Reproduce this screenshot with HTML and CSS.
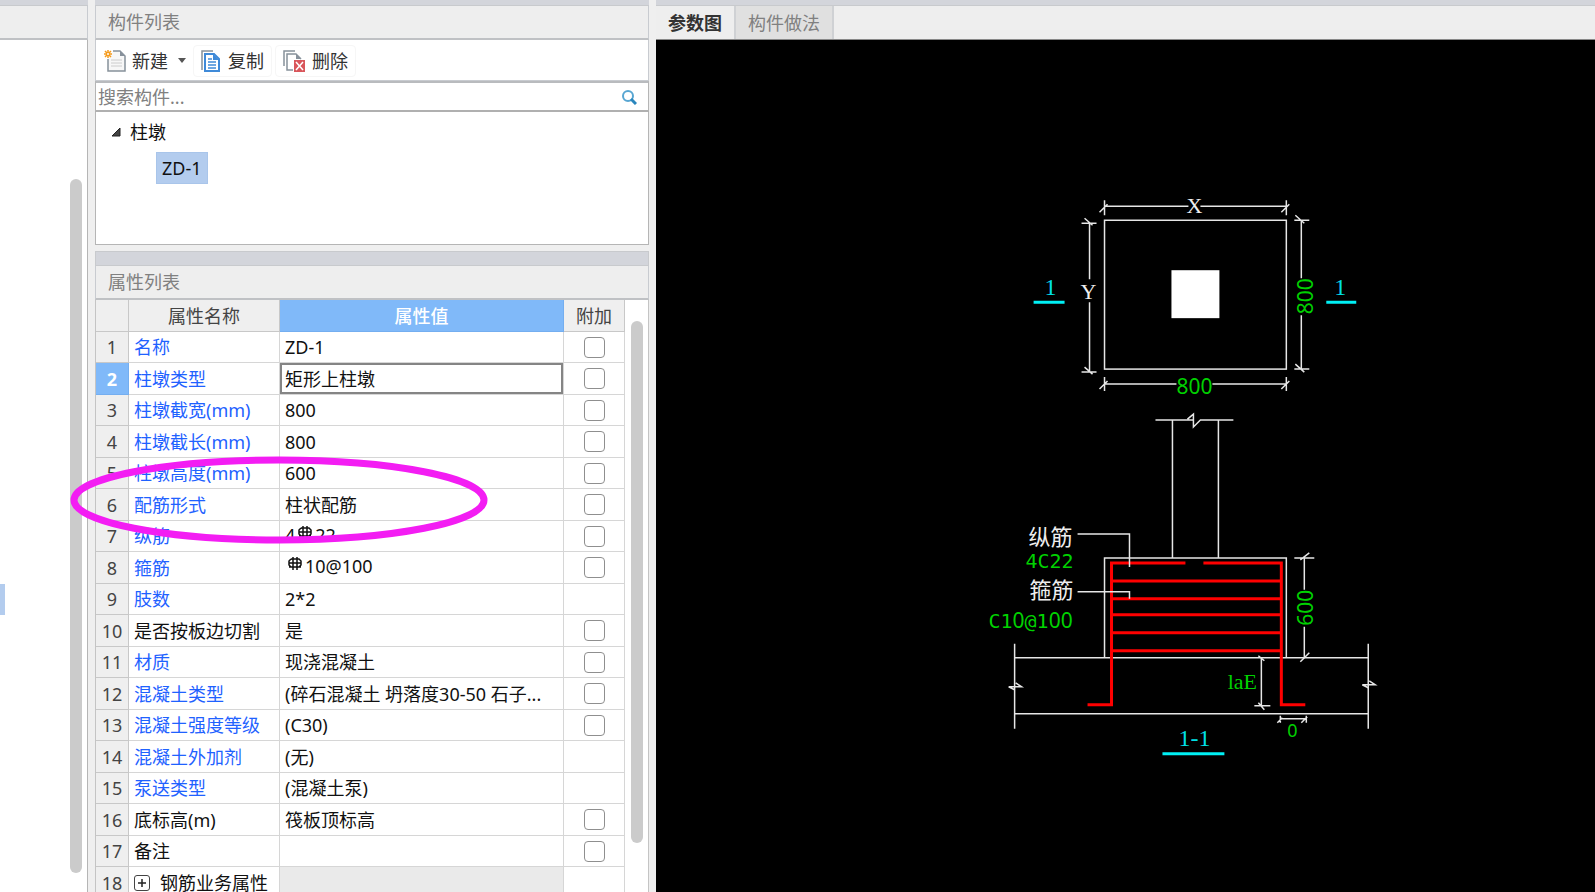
FILE: index.html
```html
<!DOCTYPE html>
<html lang="zh-CN">
<head>
    <meta charset="UTF-8">
    <meta name="viewport" content="width=device-width, initial-scale=1.0">
    <title>构件列表</title>
    <link rel="stylesheet" href="styles.css">
</head>
<body>
    <div class="workspace">
        <aside class="pane nav-pane">
            <div class="strip"></div>
            <div class="pane-title"></div>
            <div class="nav-body">
                <div class="nav-selected"></div>
                <div class="scrollbar"><div class="thumb"></div></div>
            </div>
        </aside>

        <div class="middle">
            <section class="pane list-pane">
                <div class="strip"></div>
                <h2 class="pane-title">构件列表</h2>
                <div class="toolbar">
                    <button type="button" class="tool tool-new">
                        <svg width="22" height="22" viewBox="0 0 22 22" fill="none">
                            <path d="M9 1h7l5 5v15H4V9" fill="#f7f7f7" stroke="#87919b" stroke-width="1.5"/>
                            <path d="M16 1v5h5z" fill="#87919b"/>
                            <path d="M7 10h11M7 13h11M7 16h11" stroke="#ccc"/>
                            <path d="M4 0v8M0 4h8M1 1l6 6M7 1L1 7" stroke="#f59b1c" stroke-width="1.5"/>
                            <circle cx="4" cy="4" r="1" fill="#fff"/>
                        </svg>
                        新建
                        <span class="caret"></span>
                    </button>
                    <button type="button" class="tool">
                        <svg width="20" height="22" viewBox="0 0 20 22" fill="none">
                            <path d="M1 20V1h11" stroke="#87919b" stroke-width="1.5"/>
                            <path d="M4 4h9l5 5v12H4z" fill="#fff" stroke="#3f8ad8" stroke-width="2"/>
                            <path d="M12 4v6h6z" fill="#3f8ad8"/>
                            <path d="M7 9h4M7 12h8M7 15h8M7 18h8" stroke="#3f8ad8" stroke-width="1.5"/>
                        </svg>
                        复制
                    </button>
                    <button type="button" class="tool">
                        <svg width="22" height="22" viewBox="0 0 22 22" fill="none">
                            <path d="M1 16V1h11" stroke="#87919b" stroke-width="1.5"/>
                            <path d="M10 20H4V4h9l5 5" stroke="#87919b" stroke-width="1.5"/>
                            <path d="M13 4v5h5z" fill="#87919b"/>
                            <path d="M11 10h11v12H11z" fill="#d9565b"/>
                            <path d="M13 12l7 8M20 12l-7 8" stroke="#fff" stroke-width="1.5"/>
                        </svg>
                        删除
                    </button>
                </div>
                <div class="search">
                    <input type="text" placeholder="搜索构件..." aria-label="搜索构件">
                    <svg width="16" height="16" viewBox="0 0 16 16" fill="none">
                        <circle cx="7" cy="7" r="5" stroke="#58a6d2" stroke-width="2"/>
                        <path d="M10 10l5 5" stroke="#2a86bd" stroke-width="3"/>
                    </svg>
                </div>
                <div class="tree">
                    <div class="tree-root">
                        <svg width="10" height="10" viewBox="0 0 10 10"><path d="M9 1v8H1z" fill="#444" stroke="#222"/></svg>
                        柱墩
                    </div>
                    <div class="tree-item">ZD-1</div>
                </div>
            </section>

            <section class="pane prop-pane">
                <div class="strip"></div>
                <h2 class="pane-title">属性列表</h2>
                <div class="prop-body">
                    <table>
                        <colgroup>
                            <col class="col-no"><col class="col-name"><col class="col-value"><col class="col-add">
                        </colgroup>
                        <thead>
                            <tr><th></th><th>属性名称</th><th class="active">属性值</th><th>附加</th></tr>
                        </thead>
                        <tbody>
                            <tr><th>1</th><td class="key">名称</td><td>ZD-1</td><td><input type="checkbox" aria-label="名称"></td></tr>
                            <tr class="current"><th>2</th><td class="key">柱墩类型</td><td class="editing">矩形上柱墩</td><td><input type="checkbox" aria-label="柱墩类型"></td></tr>
                            <tr><th>3</th><td class="key">柱墩截宽(mm)</td><td>800</td><td><input type="checkbox" aria-label="柱墩截宽"></td></tr>
                            <tr><th>4</th><td class="key">柱墩截长(mm)</td><td>800</td><td><input type="checkbox" aria-label="柱墩截长"></td></tr>
                            <tr><th>5</th><td class="key">柱墩高度(mm)</td><td>600</td><td><input type="checkbox" aria-label="柱墩高度"></td></tr>
                            <tr><th>6</th><td class="key">配筋形式</td><td>柱状配筋</td><td><input type="checkbox" aria-label="配筋形式"></td></tr>
                            <tr><th>7</th><td class="key">纵筋</td><td class="rebar">4<svg class="grade" viewBox="0 0 16 16"><use href="#grade"/></svg>22</td><td><input type="checkbox" aria-label="纵筋"></td></tr>
                            <tr><th>8</th><td class="key">箍筋</td><td class="rebar"><svg class="grade" viewBox="0 0 16 16"><use href="#grade"/></svg>10@100</td><td><input type="checkbox" aria-label="箍筋"></td></tr>
                            <tr><th>9</th><td class="key">肢数</td><td>2*2</td><td></td></tr>
                            <tr><th>10</th><td>是否按板边切割</td><td>是</td><td><input type="checkbox" aria-label="是否按板边切割"></td></tr>
                            <tr><th>11</th><td class="key">材质</td><td>现浇混凝土</td><td><input type="checkbox" aria-label="材质"></td></tr>
                            <tr><th>12</th><td class="key">混凝土类型</td><td>(碎石混凝土 坍落度30-50 石子...</td><td><input type="checkbox" aria-label="混凝土类型"></td></tr>
                            <tr><th>13</th><td class="key">混凝土强度等级</td><td>(C30)</td><td><input type="checkbox" aria-label="混凝土强度等级"></td></tr>
                            <tr><th>14</th><td class="key">混凝土外加剂</td><td>(无)</td><td></td></tr>
                            <tr><th>15</th><td class="key">泵送类型</td><td>(混凝土泵)</td><td></td></tr>
                            <tr><th>16</th><td>底标高(m)</td><td>筏板顶标高</td><td><input type="checkbox" aria-label="底标高"></td></tr>
                            <tr><th>17</th><td>备注</td><td></td><td><input type="checkbox" aria-label="备注"></td></tr>
                            <tr><th>18</th><td><button type="button" class="expand" aria-label="展开"><svg width="8" height="8" viewBox="0 0 8 8"><path d="M4 0v8M0 4h8" stroke="#222" stroke-width="1.5"/></svg></button>钢筋业务属性</td><td class="disabled"></td><td></td></tr>
                        </tbody>
                    </table>
                    <div class="scrollbar"><div class="thumb"></div></div>
                </div>
            </section>
        </div>

        <main class="pane view-pane">
            <div class="strip"></div>
            <div class="tabs">
                <button type="button" class="tab selected">参数图</button>
                <button type="button" class="tab">构件做法</button>
            </div>
            <div class="canvas">
                <svg viewBox="655 40 940 852">
                    <!-- 平面图 -->
                    <g class="line">
                        <rect x="1104" y="220" width="182" height="149"/>
                        <path d="M1104 206h84M1200 206h86M1104 200v15M1286 200v15M1099 212l8-8M1281 212l8-8"/>
                        <path d="M1104 384h72M1212 384h74M1104 377v14M1286 377v14M1099 389l8-8M1281 389l8-8"/>
                        <path d="M1089 223v56M1089 302v70M1081 223h15M1081 372h15M1084 218l8 7M1084 367l8 7"/>
                        <path d="M1301 220v58M1301 315v54M1294 220h15M1294 369h15M1295 215l9 8M1295 364l9 8"/>
                    </g>
                    <rect x="1171" y="270" width="48" height="48" fill="#fff"/>
                    <path class="mark" d="M1033 302h31M1326 302h30"/>
                    <text class="cad white small" x="1194" y="213">X</text>
                    <text class="cad white small" x="1088" y="299">Y</text>
                    <text class="cad cyan" x="1050" y="295">1</text>
                    <text class="cad cyan" x="1340" y="295">1</text>
                    <text class="num" x="1194" y="394">800</text>
                    <text class="num" transform="translate(1313 296) rotate(-90)">800</text>

                    <!-- 1-1 剖面 -->
                    <g class="line">
                        <path d="M1155 420h38v-6l-6 5M1193 420v7l7-7h33M1172 420v138M1218 420v138"/>
                        <path d="M1104 658V558h182v100"/>
                        <path d="M1014 658h354M1014 714h354M1014 644v85M1368 644v85"/>
                        <path d="M1008 687h13l-6-4M1008 687l6 3M1362 685h13l-6-4M1362 685l6 3"/>
                        <path d="M1304 558v32M1304 627v31M1294 558h20M1300 560l9-7M1300 662l9-9"/>
                        <path d="M1261 658v48M1254 706h16M1258 656l6 5M1258 703l6 7"/>
                        <path d="M1280 719h26M1280 716v7M1306 716v7M1277 723l5-5M1301 723l6-6"/>
                    </g>
                    <g class="bar">
                        <path d="M1185 563h-74v142h-24M1203 563h78v142h24"/>
                        <path d="M1111 581h170M1111 599h170M1111 615h170M1111 633h170M1111 651h170"/>
                    </g>
                    <path class="line" d="M1077 534h52v33M1077 592h52v7"/>
                    <path class="mark" d="M1162 754h62"/>
                    <text class="cjk" x="1050" y="545">纵筋</text>
                    <text class="letter green" x="1049" y="568">4C22</text>
                    <text class="cjk" x="1051" y="598">箍筋</text>
                    <text class="letter green" x="1030" y="628">C1<tspan class="num">0</tspan>@1<tspan class="num">00</tspan></text>
                    <text class="num" transform="translate(1313 608) rotate(-90)">600</text>
                    <text class="cad green small" x="1242" y="689">laE</text>
                    <text class="num small" x="1292" y="737">0</text>
                    <text class="cad cyan" x="1194" y="746">1-1</text>
                </svg>
            </div>
        </main>

        <svg class="highlight" viewBox="0 0 418 88">
            <ellipse cx="209" cy="44" rx="205" ry="40"/>
        </svg>
    </div>

    <!-- 钢筋等级符号 -->
    <svg class="defs">
        <symbol id="grade" viewBox="0 0 16 16">
            <path d="M6 0v13M10 0v13M2 10h12M2 6h12M4 2h8l2 2v4l-2 2M4 2L2 4v4l2 2" fill="none" stroke="#111" stroke-width="1.5"/>
        </symbol>
    </svg>
</body>
</html>
```

FILE: styles.css
```css
* {
    box-sizing: border-box;
}
body {
    margin: 0;
    font-family: "Noto Sans", "Noto Sans CJK SC", sans-serif;
    font-size: 18px;
    line-height: 26px;
    color: #111;
    background: #efefef;
}
button, input {
    font: inherit;
    color: inherit;
    margin: 0;
}
.workspace {
    position: relative;
    display: grid;
    grid-template-columns: 88px 554px minmax(0, 1fr);
    gap: 7px;
    height: 100vh;
    overflow: hidden;
}
.pane {
    display: flex;
    flex-direction: column;
    min-height: 0;
}
.strip {
    flex: none;
    height: 6px;
    background: #d3d5db;
    border-bottom: 1px solid #c8cacd;
}
.pane-title {
    flex: none;
    height: 34px;
    margin: 0;
    padding: 3px 12px;
    font-size: 18px;
    font-weight: 400;
    color: #808080;
    background: #eee;
    border: 1px solid #c8cbd0;
    border-top: 0;
    border-bottom: 2px solid #bfc1c4;
}
.scrollbar {
    flex: none;
    display: flex;
    width: 12px;
}
.thumb {
    flex: 1;
    border-radius: 6px;
    background: #cbcbcb;
}

/* 左侧导航 */
.nav-pane .pane-title {
    border-left: 0;
}
.nav-body {
    flex: 1;
    display: flex;
    justify-content: space-between;
    padding-right: 5px;
    background: #fff;
    border-right: 1px solid #b5b5b5;
}
.nav-selected {
    width: 5px;
    height: 31px;
    margin-top: 544px;
    background: #b3ccee;
}
.nav-body .scrollbar {
    padding: 139px 0 19px;
}

/* 构件列表 */
.middle {
    display: flex;
    flex-direction: column;
    gap: 6px;
    min-height: 0;
}
.list-pane {
    flex: none;
}
.toolbar {
    display: flex;
    align-items: center;
    gap: 3px;
    height: 41px;
    padding: 1px 0 0 4px;
    background: #fff;
    border: 1px solid #c8cbd0;
    border-top: 0;
}
.tool {
    display: flex;
    align-items: center;
    gap: 7px;
    height: 32px;
    padding: 0 7px;
    color: #333;
    background: #fff;
    border: 1px solid #f6f6f6;
    border-radius: 4px;
}
.tool-new {
    gap: 6px;
    padding: 0 3px;
    border-color: #fff;
}
.caret {
    margin-left: 4px;
    border: 4px solid transparent;
    border-top: 5px solid #555;
    border-bottom: 0;
}
.search {
    display: flex;
    align-items: center;
    height: 31px;
    padding-right: 11px;
    background: #fff;
    border: 1px solid #b5b5b5;
    border-top: 2px solid #b9bbbe;
    border-bottom: 2px solid #b0b0b0;
}
.search input {
    flex: 1;
    min-width: 0;
    height: 26px;
    padding: 0 2px;
    border: 0;
    outline: 0;
    background: none;
}
.search input::placeholder {
    color: #808080;
    opacity: 1;
}
.tree {
    height: 133px;
    padding: 7px 15px;
    background: #fff;
    border: 1px solid #b5b5b5;
    border-top: 0;
}
.tree-root {
    display: flex;
    align-items: center;
    gap: 9px;
}
.tree-item {
    width: max-content;
    margin: 7px 0 0 45px;
    padding: 2px 5px;
    border: 1px solid #a9c5ea;
    background: #b3ccee;
}

/* 属性列表 */
.prop-pane {
    flex: 1;
}
.prop-pane .strip {
    height: 15px;
    border: 1px solid #c8cacd;
}
.prop-body {
    flex: 1;
    display: flex;
    justify-content: space-between;
    min-height: 0;
    overflow: hidden;
    padding-right: 5px;
    background: #fff;
    border: 1px solid #c4c4c4;
    border-top: 0;
    border-bottom: 0;
}
.prop-body .scrollbar {
    padding: 21px 0 49px;
}
table {
    flex: none;
    width: 529px;
    table-layout: fixed;
    border-collapse: separate;
    border-spacing: 0;
    align-self: flex-start;
}
.col-no {
    width: 33px;
}
.col-name {
    width: 151px;
}
.col-value {
    width: 284px;
}
.col-add {
    width: 61px;
}
tr {
    height: 31px;
}
thead tr, tbody tr:nth-child(even) {
    height: 32px;
}
th, td {
    padding: 0 0 0 5px;
    line-height: 26px;
    font-weight: 400;
    text-align: left;
    white-space: nowrap;
    overflow: hidden;
    border-right: 1px solid #d6d6d6;
    border-bottom: 1px solid #d6d6d6;
}
th {
    padding: 0;
    text-align: center;
    color: #444;
    background: #efefef;
    border-color: #c8c8c8;
}
th.active, .current th {
    color: #fff;
    background: #80b9f9;
    border-color: #74aef0;
}
th.active {
    font-weight: 500;
}
.current th {
    font-weight: 700;
}
td:last-child {
    padding: 0;
    text-align: center;
}
.key {
    color: #1f62ff;
}
.editing {
    box-shadow: inset 0 0 0 2px #858585;
}
.disabled {
    background: #eaeaea;
}
.grade {
    width: 16px;
    height: 16px;
    margin: 0 2px;
    vertical-align: 0;
}
.rebar {
    padding-bottom: 3px;
    line-height: 24px;
}
input[type="checkbox"] {
    appearance: none;
    display: block;
    width: 21px;
    height: 21px;
    margin: 0 auto;
    border: 1px solid #8f8f8f;
    border-radius: 4px;
    background: #fff;
}
.expand {
    display: inline-grid;
    place-items: center;
    width: 16px;
    height: 16px;
    margin-right: 10px;
    padding: 0;
    vertical-align: 3px;
    line-height: 8px;
    background: #fff;
    border: 1px solid #444;
    border-radius: 3px;
}
.expand svg {
    display: block;
}

/* 参数图 */
.tabs {
    flex: none;
    display: flex;
    height: 33px;
    background: #eee;
}
.tab {
    padding: 0 12px;
    color: #808080;
    background: #e0e0e0;
    border: 0;
    border-right: 2px solid #cfd1d4;
}
.tab.selected {
    font-weight: 700;
    color: #333;
    background: #eee;
}
.canvas {
    flex: 1;
    min-height: 0;
    background: #000;
    border-top: 1px solid #888;
}
.canvas svg {
    display: block;
    width: 100%;
    height: 100%;
}
.line {
    fill: none;
    stroke: #e6e6e6;
    stroke-width: 1.5;
}
.bar {
    fill: none;
    stroke: #f00;
    stroke-width: 3;
}
.mark {
    stroke: #00f0f5;
    stroke-width: 3;
}
.canvas text {
    text-anchor: middle;
}
.cad {
    font-family: "Liberation Serif", serif;
    font-size: 24px;
}
.cad.small {
    font-size: 22px;
}
.letter {
    font-family: "DejaVu Sans Mono", monospace;
    font-size: 20px;
}
.num {
    font-family: "Noto Sans", sans-serif;
    font-size: 21px;
    fill: #00d200;
}
.num.small {
    font-size: 18px;
}
.cjk {
    font-family: "Noto Sans CJK SC", sans-serif;
    font-size: 22px;
    fill: #eee;
}
.white {
    fill: #eee;
}
.green {
    fill: #00d200;
}
.cyan {
    fill: #00dfe4;
}

/* 圈注 */
.highlight {
    position: absolute;
    left: 70px;
    top: 456px;
    width: 418px;
    height: 88px;
    pointer-events: none;
}
.highlight ellipse {
    fill: none;
    stroke: #f31df3;
    stroke-width: 7;
}
.defs {
    position: absolute;
    width: 0;
    height: 0;
}
```
